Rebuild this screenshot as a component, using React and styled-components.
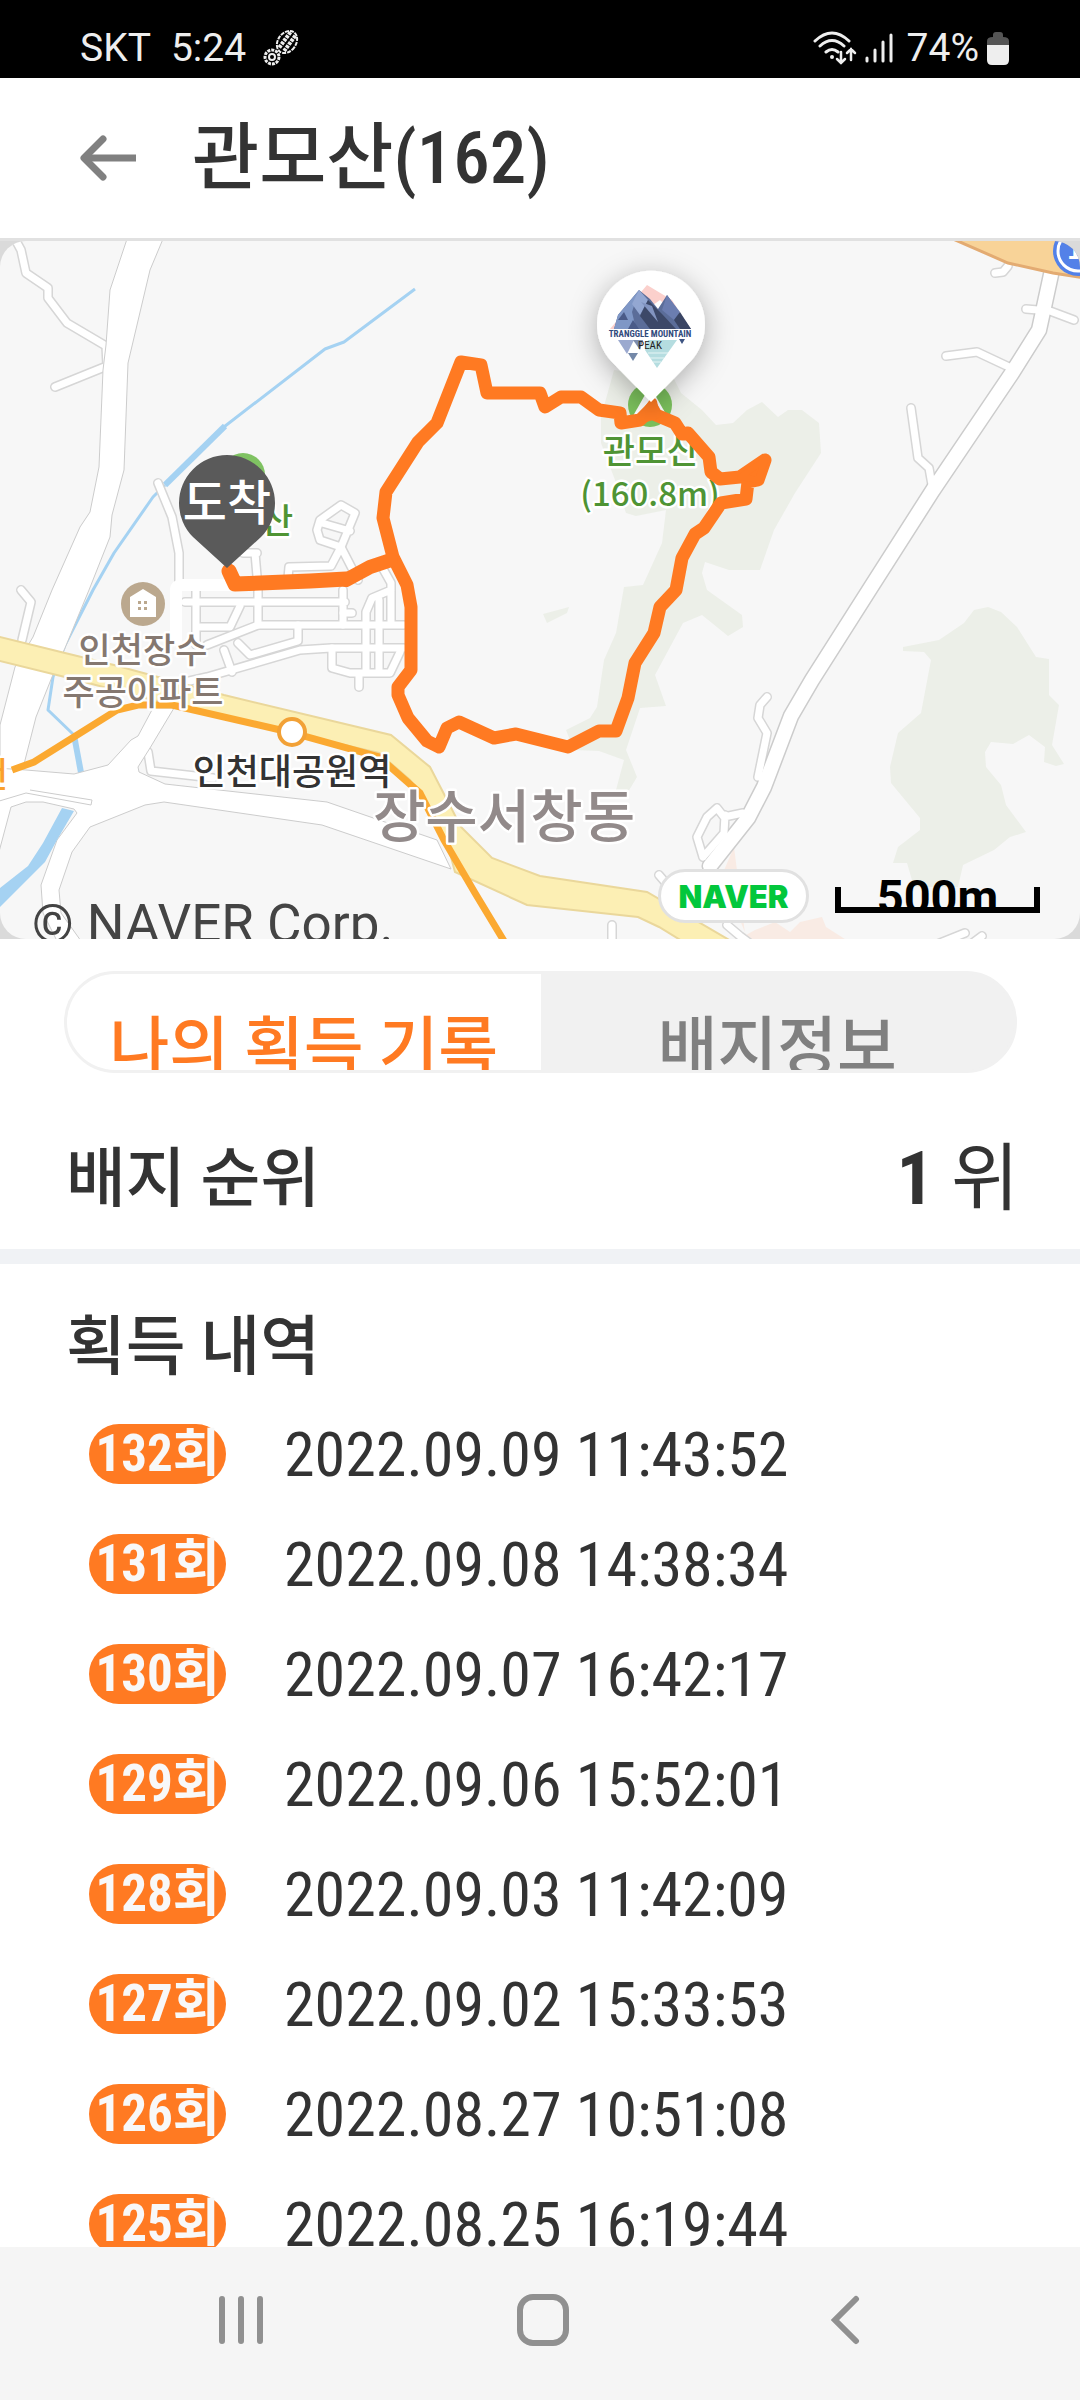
import React from 'react';
import styled, { createGlobalStyle } from 'styled-components';

const GlobalStyle = createGlobalStyle`
  * {
    box-sizing: border-box;
  }
  body {
    margin: 0;
    background: #ffffff;
    color: #333333;
    font-family: 'Roboto Condensed', Roboto, 'Noto Sans CJK KR', sans-serif;
  }
  button {
    border: 0;
    padding: 0;
    background: none;
    font: inherit;
    color: inherit;
  }
`;

const Screen = styled.div`
  display: flex;
  flex-direction: column;
  height: 100vh;
  overflow: hidden;
`;

const StatusBar = styled.div`
  flex: none;
  display: flex;
  justify-content: space-between;
  align-items: center;
  height: 78px;
  padding: 18px 71px 0 80px;
  background: #000000;
  color: #eeeeee;
  font-family: Roboto, sans-serif;
  font-size: 39px;
`;

const StatusGroup = styled.div`
  display: flex;
  align-items: center;
  gap: ${({ $gap }) => $gap}px;
`;

const Header = styled.header`
  flex: none;
  display: flex;
  align-items: center;
  gap: 54px;
  height: 163px;
  padding: 0 78px;
  border-bottom: 3px solid #e1e1e1;
`;

const BackButton = styled.button`
  display: flex;
`;

const Title = styled.h1`
  margin: 0;
  font-size: 73px;
  font-weight: 500;
  line-height: 100px;
`;

const MapFrame = styled.section`
  flex: none;
  position: relative;
  overflow: hidden;
  background: #dadada;
`;

const MapDrawing = styled.svg`
  display: block;
  width: 100%;
  height: auto;
  border-radius: 26px;
  background: #f7f7f7;
  font-family: 'Noto Sans CJK KR', sans-serif;
`;

const Copyright = styled.span`
  position: absolute;
  left: 32px;
  bottom: -15px;
  color: #444444;
  font-family: Roboto, sans-serif;
  font-size: 53px;
  line-height: 60px;
`;

const NaverLogo = styled.a`
  position: absolute;
  right: 271px;
  bottom: 16px;
  display: flex;
  align-items: center;
  justify-content: center;
  width: 151px;
  height: 54px;
  border: 3px solid #e1e1e1;
  border-radius: 27px;
  background: #ffffff;
  color: #03c73c;
  font-family: Inter, sans-serif;
  font-size: 31px;
  font-weight: 900;
  text-decoration: none;
`;

const ScaleBar = styled.div`
  position: absolute;
  right: 40px;
  bottom: 26px;
  width: 205px;
  height: 26px;
  display: flex;
  align-items: flex-end;
  justify-content: center;
  border: 6px solid #000000;
  border-top: 0;
  color: #000000;
  font-family: Roboto, sans-serif;
  font-size: 47px;
  font-weight: 700;
  line-height: 20px;
`;

const Tabs = styled.div`
  flex: none;
  display: flex;
  height: 102px;
  margin: 32px 63px 0 64px;
  border: 3px solid #f1f1f1;
  border-radius: 51px;
  background: #f1f1f1;
  overflow: hidden;
`;

const Tab = styled.button`
  flex: 1;
  padding-top: 24px;
  overflow: hidden;
  background: ${({ $active }) => ($active ? '#ffffff' : '#f1f1f1')};
  color: ${({ $active }) => ($active ? '#ff7a22' : '#808080')};
  font-size: 65px;
  font-weight: 500;
  line-height: 100px;
  white-space: nowrap;
`;

const RankRow = styled.section`
  flex: none;
  display: flex;
  align-items: center;
  justify-content: space-between;
  height: 176px;
  padding: 60px 61px 24px 66px;
`;

const SectionTitle = styled.h2`
  margin: 0;
  font-size: 65px;
  font-weight: 500;
  line-height: 92px;
`;

const Rank = styled.p`
  margin: 0;
  font-size: 74px;
  line-height: 92px;
`;

const Divider = styled.hr`
  flex: none;
  width: 100%;
  height: 15px;
  margin: 0;
  border: 0;
  background: #f0f2f5;
`;

const History = styled.section`
  flex: 1;
  min-height: 0;
  padding: 37px 66px 0;
  overflow: hidden;
`;

const RecordList = styled.ul`
  margin: 0;
  padding: 6px 0 0 23px;
  list-style: none;
`;

const Record = styled.li`
  display: flex;
  align-items: center;
  gap: 58px;
  height: 110px;
`;

const CountBadge = styled.span`
  display: flex;
  align-items: center;
  justify-content: center;
  width: 137px;
  height: 60px;
  border-radius: 30px;
  background: #ff7a22;
  color: #f8f8f8;
  font-size: 51px;
  font-weight: 700;
  line-height: 60px;
  white-space: nowrap;
`;

const RecordTime = styled.time`
  padding-top: 2px;
  font-size: 62px;
  line-height: 80px;
`;

const NavBar = styled.nav`
  flex: none;
  display: grid;
  grid-template-columns: repeat(3, 1fr);
  height: 153px;
  padding: 0 84px 8px 90px;
  background: #f5f5f5;
`;

const NavButton = styled.button`
  display: flex;
  align-items: center;
  justify-content: center;
`;

const records = [
  { count: 132, time: '2022.09.09 11:43:52' },
  { count: 131, time: '2022.09.08 14:38:34' },
  { count: 130, time: '2022.09.07 16:42:17' },
  { count: 129, time: '2022.09.06 15:52:01' },
  { count: 128, time: '2022.09.03 11:42:09' },
  { count: 127, time: '2022.09.02 15:33:53' },
  { count: 126, time: '2022.08.27 10:51:08' },
  { count: 125, time: '2022.08.25 16:19:44' }
];

const StepsIcon = () => (
  <svg width='38' height='38' viewBox='3 0 38 38' fill='none' stroke='#eeeeee' overflow='visible' aria-hidden='true'>
    <g transform='rotate(36 24 13)'>
      <ellipse cx='24' cy='13' rx='9' ry='12' strokeWidth='2' strokeDasharray='4 1' />
      <path d='M21 3v20M27 3v20' strokeWidth='4' strokeDasharray='3 1' />
    </g>
    <circle cx='9' cy='28' r='7' strokeWidth='3' strokeDasharray='3 1' />
    <circle cx='9' cy='28' r='3' strokeWidth='2' />
  </svg>
);

const WifiIcon = () => (
  <svg width='44' height='34' viewBox='0 0 44 34' fill='none' stroke='#eeeeee' strokeLinecap='round' aria-hidden='true'>
    <path d='M2 10Q19 -6 36 10M7 15Q19 4 31 15M13 21Q19 16 25 21' strokeWidth='3' />
    <circle cx='19' cy='26' r='2' fill='#eeeeee' stroke='none' />
    <path d='M28 21v11M24 28l4 4 4-4M38 29V18M34 22l4-4 4 4' strokeWidth='2.5' />
  </svg>
);

const SignalIcon = () => (
  <svg width='34' height='30' viewBox='0 0 34 30' stroke='#eeeeee' strokeWidth='3' strokeLinecap='round' aria-hidden='true'>
    <path d='M2 25v3M10 17v11M18 9v19M26 2v26' />
  </svg>
);

const BatteryIcon = () => (
  <svg width='22' height='33' viewBox='0 0 22 33' aria-hidden='true'>
    <path d='M6 5V3q0-3 3-3h4q3 0 3 3v2q6 0 6 4v4H0V9q0-4 6-4z' fill='#555555' />
    <path d='M0 13h22v15q0 5-5 5H5q-5 0-5-5z' fill='#eeeeee' />
  </svg>
);

const PeakLogo = () => (
  <g>
    <path d='M647 285L610 329L620 329L660 300L690 329L672 300Z' fill='#fbd0cc' />
    <path d='M639 290L618 315L614 329H691L667 295L658 309L650 299Z' fill='#5b6d99' />
    <path d='M639 290L618 315L614 329H636L632 312Z' fill='#7f97c6' />
    <path d='M639 290L632 304L640 315L648 300Z' fill='#93a7d2' />
    <path d='M648 300L640 316L650 329H676L662 314Z' fill='#3c4868' />
    <path d='M667 295L662 310L674 320L680 312Z' fill='#6b7db0' />
    <path d='M680 312L674 320L680 329H691Z' fill='#3a4564' />
    <path d='M641 302L658 322L652 306Z' fill='#8294c0' />
    <path d='M618 320l6-8 4 8zM628 329l5-9 6 9z' fill='#4a5b88' />
    <path d='M618 340H634L627 354Z' fill='#9ba9cf' />
    <path d='M633 340H643L640 350Z' fill='#7d8dae' />
    <path d='M628 353H638L633 361Z' fill='#7488a8' />
    <path d='M648 340H677L657 368L645 350Z' fill='#b5dde0' />
    <path d='M648 353H668M650 358H664M653 362H661' stroke='#e6f5f5' strokeWidth='1' />
    <path d='M679 339H685L682 344Z' fill='#3d5482' />
    <g fontFamily='Roboto Condensed' textAnchor='middle'>
      <text x='650' y='337' fontSize='9' fontWeight='700' fill='#314b7c' stroke='#ffffff' strokeWidth='1' paintOrder='stroke'>
        TRANGGLE MOUNTAIN
      </text>
      <text x='650' y='349' fontSize='11' fill='#222222'>
        PEAK
      </text>
    </g>
  </g>
);

const streets = [
  'M15 239L21 250L26 273L48 288L48 298L67 323L106 346L107 366L55 387',
  'M21 590L31 602L22 640',
  'M158 483L172 517L179 553V582',
  'M255 553L257 576M243 553H257',
  'M341 505L320 520L317 530L320 540L341 547L355 513ZM322 523L350 531',
  'M341 547L358 580M341 547L331 566L289 567L288 578',
  'M382 567L391 583V622M391 590L372 598L366 612V672',
  'M196 590V645M185 602H345M258 590V625M343 590V625',
  'M207 645L258 625H404M200 627H230L240 606',
  'M232 672L224 650M238 643L250 655L298 641V625',
  'M185 682L207 677L300 650L331 648H404',
  'M332 648V668L350 673H390L400 652M379 600V672M359 674V687',
  'M343 613H352',
  'M148 752L151 771L213 778',
  'M1008 266L1003 272L995 273',
  'M1026 309L1050 311L1074 320',
  'M946 356L977 352L1009 367',
  'M911 408L918 458L929 468L932 485',
  'M767 697L760 705L758 718L767 733L758 777',
  'M743 813L724 817L717 808L707 817L697 837L703 857M725 815L724 833L703 857',
  'M659 875L665 882H672M727 925L740 936L748 942M612 925V945M930 947L965 933M970 945L982 936'
];

const route =
  'M393 557L383 518L386 492L418 442L437 423L461 362L481 365L487 393H540L545 407L561 397H581L599 410' +
  'L620 413L621 423L640 420L652 408L656 415L675 423L682 434L688 433L709 457L711 472L720 479L740 477' +
  'L765 460L758 480L748 482L746 499L721 503L704 528L695 534L682 558L676 590L660 607L654 633L635 663' +
  'L628 698L616 731H599L568 747L540 740L516 734L494 738L459 722L447 728L439 747L427 741L408 718' +
  'L398 695V687L411 670V607L407 585Z';

const mainRoad = 'M1052 270L1039 330L1012 373L933 490L873 584L812 680L791 716L764 787L748 818L710 866';

const CourseMap = () => (
  <MapDrawing viewBox='0 241 1080 698' role='img' aria-label='관모산 코스 지도'>
    <defs>
      <filter id='pinShadow' x='-60%' y='-60%' width='220%' height='220%'>
        <feDropShadow dx='0' dy='6' stdDeviation='14' floodColor='#000000' floodOpacity='0.3' />
      </filter>
    </defs>

    {/* woods */}
    <g fill='#ecefe8'>
      <path d='M614 370L601 417V443L615 480L626 513L636 516L666 510L662 543L643 585L624 587L616 633L604 660L597 707L590 718L566 730L574 750L599 751L624 760L616 790L628 792L637 777L626 750L640 708L666 706L655 675L683 623L702 615L728 636L743 627L742 615L707 590L702 573L705 562L729 570H760L774 530L795 493L821 453L819 423L802 410H788L778 417L762 402L747 410L733 423L716 425L702 410L681 393L673 377Z' />
      <path d='M903 647L939 640L964 623L974 610L988 607L1001 612L1017 627L1036 657L1049 659V695L1059 705L1052 745L1064 764L1056 766L1044 762L1045 747L1029 735L1013 744L991 742L985 752L986 767L1001 785L1006 805L1026 832L1010 837L994 850L963 865L958 887H914L907 863H893L898 847L920 830V818L891 783L890 767L898 733L921 713L931 660L924 652L903 651Z' />
      <path d='M543 614L569 607L567 613L547 623Z' />
    </g>
    <path d='M734 847L722 875L746 935L755 930L775 922L790 932L800 922L822 917L826 927L848 941H746Z' fill='#f9ebe4' />

    {/* stream */}
    <g fill='none' stroke='#a5d2f2' strokeLinejoin='round'>
      <path d='M415 289L344 342L325 349L220 430' strokeWidth='3' />
      <path d='M225 426L165 485' strokeWidth='6' />
      <path d='M165 485L153 497L114 553L93 590L65 645L53 677L48 710L74 735' strokeWidth='3' />
      <path d='M74 735L82 778' strokeWidth='6' />
    </g>

    {/* side streets */}
    <g fill='none' strokeLinecap='round' strokeLinejoin='round'>
      {streets.map((d) => <path key={d} d={d} stroke='#d6d6d6' strokeWidth='10' />)}
      <path d={mainRoad} stroke='#cccccc' strokeWidth='17' />
      {streets.map((d) => <path key={d} d={d} stroke='#ffffff' strokeWidth='7' />)}
      <path d={mainRoad} stroke='#ffffff' strokeWidth='14' />
      <path d='M176 640V590Q176 585 182 585H230' stroke='#ffffff' strokeWidth='12' />
    </g>

    {/* wide roads */}
    <g fill='#ffffff' stroke='#cccccc' strokeWidth='1'>
      <path d='M127 239L110 290L106 345L103 370L99 467L90 512L80 527L52 590L33 637L15 667L0 725V775L22 772L36 717L52 677L65 648L89 590L110 537L112 515L124 470L128 363L150 270L163 239Z' />
      <path d='M-4 768L26 770L74 774L108 765L131 740L138 736L153 708H174L150 748L138 767L139 772L165 784L327 802L437 840L451 869L322 825L164 802L145 805L90 827L72 852L59 890L61 913L81 941H57L43 913L41 885L57 840L77 813L74 809L43 802H26L11 807L-4 863Z' />
      <path d='M-4 802L26 793L91 805L92 800L30 790' fill='none' />
    </g>
    <path d='M62 808L74 811L57 840L45 862L0 907V888L28 866L43 843Z' fill='#a5d2f2' />
    <path
      d='M-4 636L65 653L114 665L224 695L391 735L430 767L461 827L492 858L540 876L647 892L731 941H682L659 927L638 917L527 905L455 872L451 857L434 813L410 780L379 753L172 705L69 678L-4 660Z'
      fill='#fcefb4'
      stroke='#ead79b'
      strokeWidth='2'
    />
    <path d='M953 239L1008 263L1053 273L1084 278V239Z' fill='#f8d398' stroke='#e3ab72' strokeWidth='3' />
    <circle cx='1078' cy='251' r='25' fill='#5381e8' />
    <circle cx='1078' cy='251' r='20' fill='none' stroke='#ffffff' strokeWidth='3' />
    <text x='1067' y='259' fontSize='26' fontWeight='700' fill='#ffffff'>1</text>

    {/* subway */}
    <path d='M12 770L34 762L117 710L138 705H172L289 732L379 757L420 793L444 840L475 893L504 941' fill='none' stroke='#fba931' strokeWidth='7' />
    <circle cx='292' cy='732' r='13' fill='#ffffff' stroke='#f2a136' strokeWidth='4' />

    {/* place icons */}
    <circle cx='143' cy='604' r='22' fill='#bba88e' />
    <path d='M130 597L143 589L156 597V617H130Z' fill='#ffffff' />
    <path d='M138 601h3v3h-3zM144 601h3v3h-3zM138 607h3v3h-3zM144 607h3v3h-3z' fill='#bba88e' />
    <circle cx='243' cy='475' r='22' fill='#7fc262' />
    <circle cx='650' cy='405' r='22' fill='#7bc05c' />
    <path d='M650 386L633 416H667Z' fill='#ffffff' />

    <g fontWeight='500' textAnchor='middle' stroke='#ffffff' strokeWidth='5' strokeLinejoin='round' paintOrder='stroke'>
      <g fontSize='35'>
        <text x='143' y='663' fill='#857870'>인천장수</text>
        <text x='143' y='705' fill='#857870'>주공아파트</text>
        <text x='651' y='464' fill='#4f9434'>관모산</text>
        <text x='277' y='534' fill='#4f9434'>산</text>
        <text x='-8' y='788' fill='#faa02c'>천</text>
      </g>
      <text x='650' y='506' fontSize='33' fill='#4f9434'>(160.8m)</text>
      <text x='292' y='785' fontSize='36' fill='#333333'>인천대공원역</text>
      <text x='504' y='837' fontSize='57' fill='#928a8a'>장수서창동</text>
    </g>

    {/* recorded track */}
    <g fill='none' stroke='#ff7a22' strokeLinejoin='round' strokeLinecap='round'>
      <path d={route} strokeWidth='13' />
      <path d='M740 477L765 460L758 480Z' fill='#ff7a22' strokeWidth='6' />
      <path d='M640 420L653 402L656 415Z' fill='#ff7a22' strokeWidth='8' />
      <path d='M229 571L235 584L310 581L346 579' strokeWidth='15' />
      <path d='M346 580L370 567L391 560' strokeWidth='14' />
    </g>

    <path d='M227 568L193 537A48 48 0 1 1 261 537Z' fill='#5a5a5a' />
    <text x='227' y='520' fontSize='48' fontWeight='500' fill='#ffffff' textAnchor='middle'>도착</text>

    <path d='M651 402L611 361A54 54 0 1 1 691 361Z' fill='#ffffff' filter='url(#pinShadow)' />
    <PeakLogo />
  </MapDrawing>
);

const App = () => {
  return (
    <>
      <GlobalStyle />
      <Screen>
        <StatusBar>
          <StatusGroup $gap={20}>
            <span>SKT</span>
            <span>5:24</span>
            <StepsIcon />
          </StatusGroup>
          <StatusGroup $gap={8}>
            <WifiIcon />
            <SignalIcon />
            <span>74%</span>
            <BatteryIcon />
          </StatusGroup>
        </StatusBar>

        <Header>
          <BackButton aria-label='뒤로'>
            <svg width='60' height='52' viewBox='0 0 60 52' fill='none' stroke='#808080' strokeWidth='7'>
              <path d='M58 26H7' />
              <path d='M25 7L6 26L25 45' strokeLinecap='round' strokeLinejoin='round' />
            </svg>
          </BackButton>
          <Title>관모산(162)</Title>
        </Header>

        <MapFrame>
          <CourseMap />
          <Copyright>© NAVER Corp.</Copyright>
          <NaverLogo href='#naver'>NAVER</NaverLogo>
          <ScaleBar>500m</ScaleBar>
        </MapFrame>

        <Tabs>
          <Tab $active>나의 획득 기록</Tab>
          <Tab>배지정보</Tab>
        </Tabs>

        <RankRow>
          <SectionTitle>배지 순위</SectionTitle>
          <Rank><b>1</b> 위</Rank>
        </RankRow>
        <Divider />

        <History>
          <SectionTitle>획득 내역</SectionTitle>
          <RecordList>
            {records.map(({ count, time }) => (
              <Record key={count}>
                <CountBadge>{count}회</CountBadge>
                <RecordTime>{time}</RecordTime>
              </Record>
            ))}
          </RecordList>
        </History>

        <NavBar>
          <NavButton aria-label='최근 앱'>
            <svg width='46' height='50' viewBox='0 0 46 50' stroke='#909090' strokeWidth='6' strokeLinecap='round'>
              <path d='M4 4V46M23 4V46M42 4V46' />
            </svg>
          </NavButton>
          <NavButton aria-label='홈'>
            <svg width='52' height='52' viewBox='0 0 52 52' fill='none' stroke='#909090' strokeWidth='6'>
              <rect x='3' y='3' width='46' height='46' rx='13' />
            </svg>
          </NavButton>
          <NavButton aria-label='이전'>
            <svg width='30' height='50' viewBox='0 0 30 50' fill='none' stroke='#909090' strokeWidth='6' strokeLinecap='round'>
              <path d='M26 4L5 25L26 46' />
            </svg>
          </NavButton>
        </NavBar>
      </Screen>
    </>
  );
};

export default App;
